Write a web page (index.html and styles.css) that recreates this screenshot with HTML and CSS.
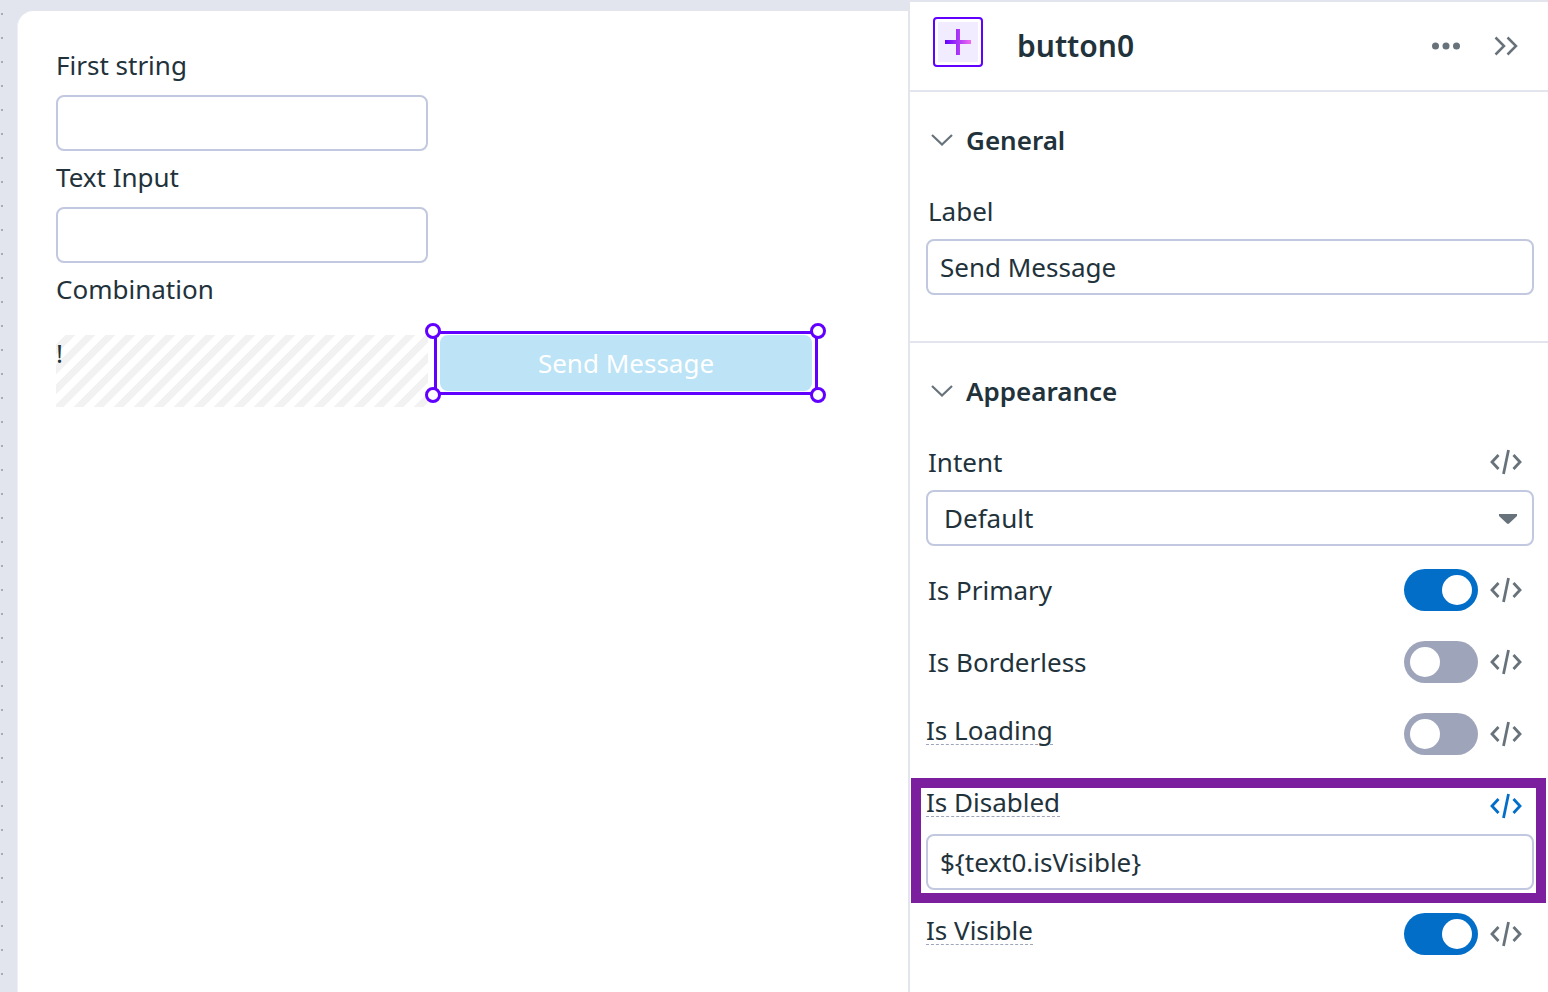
FILE: index.html
```html
<!DOCTYPE html>
<html lang="en">
<head>
<meta charset="utf-8">
<title>button0</title>
<link rel="stylesheet" href="styles.css">
</head>
<body>
<svg class="defs" aria-hidden="true">
  <symbol id="code" viewBox="0 0 32 26">
    <path d="M8.500 6 2 13l6.500 7M23.500 6 30 13l-6.500 7" fill="none" stroke="currentColor" stroke-width="2.800"/>
    <path d="M18.500 1 13.500 25" fill="none" stroke="currentColor" stroke-width="2.800"/>
  </symbol>
  <symbol id="chevron" viewBox="0 0 22 12">
    <path d="M1 1l10 9.500L21 1" fill="none" stroke="currentColor" stroke-width="2.200"/>
  </symbol>
</svg>
<div class="app">
  <main class="canvas">
    <form class="sheet">
      <div class="field">
        <label for="first">First string</label>
        <input class="box" id="first" type="text">
      </div>
      <div class="field">
        <label for="second">Text Input</label>
        <input class="box" id="second" type="text">
      </div>
      <div class="caption">Combination</div>
      <div class="result-row">
        <div class="result">!</div>
        <div class="selected">
          <button class="send" type="button" disabled>Send Message</button>
          <div class="outline">
            <span class="handle top left"></span>
            <span class="handle top right"></span>
            <span class="handle bottom left"></span>
            <span class="handle bottom right"></span>
          </div>
        </div>
      </div>
    </form>
  </main>

  <aside class="panel">
    <header class="panel-head">
      <span class="widget-icon">
        <svg width="40" height="40" viewBox="0 0 40 40" aria-hidden="true">
          <defs>
            <linearGradient id="plus" gradientUnits="userSpaceOnUse" x1="7" y1="0" x2="33" y2="0">
              <stop offset="0" stop-color="#6200ff"/>
              <stop offset="0.500" stop-color="#a936f7"/>
              <stop offset="1" stop-color="#f26bf0"/>
            </linearGradient>
          </defs>
          <rect width="40" height="40" fill="#f1ecff"/>
          <path d="M18 7h4v11h11v4H22v11h-4V22H7v-4h11z" fill="url(#plus)"/>
        </svg>
      </span>
      <h1>button0</h1>
      <button class="icon-button" type="button" aria-label="More">
        <svg width="28" height="8" viewBox="0 0 28 8"><g fill="currentColor"><circle cx="3.500" cy="4" r="3.500"/><circle cx="14" cy="4" r="3.500"/><circle cx="24.500" cy="4" r="3.500"/></g></svg>
      </button>
      <button class="icon-button" type="button" aria-label="Collapse">
        <svg width="24" height="20" viewBox="0 0 24 20"><path d="M1.500 1.500 10 10l-8.500 8.500M13.500 1.500 22 10l-8.500 8.500" fill="none" stroke="currentColor" stroke-width="2.500"/></svg>
      </button>
    </header>

    <section class="section">
      <h2><svg class="chevron"><use href="#chevron"/></svg>General</h2>
      <div class="props">
        <div class="prop">
          <div class="row"><label class="name" for="label">Label</label></div>
          <input class="box" id="label" type="text" value="Send Message">
        </div>
      </div>
    </section>

    <section class="section">
      <h2><svg class="chevron"><use href="#chevron"/></svg>Appearance</h2>
      <div class="props">
        <div class="prop">
          <div class="row">
            <label class="name" for="intent">Intent</label>
            <button class="code" type="button" aria-label="Edit intent as code"><svg><use href="#code"/></svg></button>
          </div>
          <div class="select">
            <select class="box" id="intent"><option>Default</option></select>
            <svg class="caret" viewBox="0 0 18 10"><path d="M0 0h18v2L10 9.600q-1 .8-2 0L0 2z" fill="currentColor"/></svg>
          </div>
        </div>
        <div class="row">
          <label class="name" for="primary">Is Primary</label>
          <input class="toggle" id="primary" type="checkbox" checked>
          <button class="code" type="button" aria-label="Edit primary as code"><svg><use href="#code"/></svg></button>
        </div>
        <div class="row">
          <label class="name" for="borderless">Is Borderless</label>
          <input class="toggle" id="borderless" type="checkbox">
          <button class="code" type="button" aria-label="Edit borderless as code"><svg><use href="#code"/></svg></button>
        </div>
        <div class="row">
          <label class="name hint" for="loading">Is Loading</label>
          <input class="toggle" id="loading" type="checkbox">
          <button class="code" type="button" aria-label="Edit loading as code"><svg><use href="#code"/></svg></button>
        </div>
        <div class="prop highlighted">
          <div class="row">
            <label class="name hint" for="disabled">Is Disabled</label>
            <button class="code active" type="button" aria-label="Edit disabled as code"><svg><use href="#code"/></svg></button>
          </div>
          <input class="box" id="disabled" type="text" value="${text0.isVisible}">
        </div>
        <div class="row">
          <label class="name hint" for="visible">Is Visible</label>
          <input class="toggle" id="visible" type="checkbox" checked>
          <button class="code" type="button" aria-label="Edit visible as code"><svg><use href="#code"/></svg></button>
        </div>
      </div>
    </section>
  </aside>
</div>
</body>
</html>
```

FILE: styles.css
```css
* {
  box-sizing: border-box;
}

body {
  margin: 0;
  color: #22323b;
  font: 26px/36px "Noto Sans", "Open Sans", sans-serif;
}

button,
input,
select {
  margin: 0;
  color: inherit;
  font: inherit;
}

h1,
h2 {
  margin: 0;
  font-weight: 600;
}

.defs {
  position: absolute;
  width: 0;
  height: 0;
}

.app {
  display: flex;
  min-height: 100vh;
}

/* Canvas */

.canvas {
  display: flex;
  flex: 1;
  min-width: 0;
  padding: 11px 0 0 17px;
  background: #e2e5ee radial-gradient(circle at 2px 14px, #a8abb5 1px, transparent 1px) 0 0 / 24px 24px;
}

.sheet {
  display: flex;
  flex: 1;
  flex-direction: column;
  gap: 8px;
  min-width: 0;
  padding: 36px 38px;
  border-left: 1px solid #eff0f7;
  border-radius: 16px 0 0 0;
  background: #fff;
}

.field {
  display: flex;
  flex-direction: column;
  gap: 12px;
  max-width: 372px;
}

.box {
  display: block;
  width: 100%;
  height: 56px;
  padding: 0 12px;
  border: 2px solid #c1c8df;
  border-radius: 8px;
  background: #fff;
}

.result-row {
  display: grid;
  grid-template-columns: repeat(2, minmax(0, 372px));
  align-items: start;
  gap: 12px;
  margin-top: 20px;
}

.result {
  height: 72px;
  background: linear-gradient(135deg, transparent 25%, #f2f2f2 25% 50%, transparent 50% 75%, #f2f2f2 75%) 0 0 / 20px 20px;
}

.selected {
  position: relative;
}

.send {
  display: block;
  width: 100%;
  height: 56px;
  border: 0;
  border-radius: 8px;
  background: #bce3f6;
  color: #fff;
}

.outline {
  position: absolute;
  inset: -4px -6px;
  border: 3px solid #6200ff;
}

.handle {
  position: absolute;
  width: 16px;
  height: 16px;
  border: 3px solid #6200ff;
  border-radius: 50%;
  background: #fff;
}

.top {
  top: -11px;
}

.bottom {
  bottom: -11px;
}

.left {
  left: -12px;
}

.right {
  right: -11px;
}

/* Property panel */

.panel {
  flex: 0 0 640px;
  border: solid #e2e5ee;
  border-width: 2px 0 0 2px;
  background: #fff;
}

.panel-head {
  display: flex;
  align-items: center;
  gap: 34px;
  height: 90px;
  padding: 0 30px 0 23px;
  border-bottom: 2px solid #e2e5ee;
  color: #67727a;
}

.widget-icon {
  display: grid;
  place-items: center;
  width: 50px;
  height: 50px;
  margin-bottom: 8px;
  border: 2px solid #6200ff;
  border-radius: 4px;
}

h1 {
  flex: 1;
  color: #22323b;
  font-size: 30px;
}

.icon-button,
.code {
  display: flex;
  padding: 0;
  border: 0;
  background: none;
}

.icon-button {
  color: #67727a;
}

.section {
  padding: 30px 14px 46px 16px;
}

.section + .section {
  border-top: 2px solid #e2e5ee;
}

h2 {
  display: flex;
  align-items: center;
  gap: 13px;
  padding-left: 5px;
  font-size: 26px;
}

.chevron {
  width: 22px;
  height: 12px;
  color: #67727a;
}

.props {
  display: flex;
  flex-direction: column;
  gap: 16px;
  margin-top: 25px;
}

.row {
  display: flex;
  align-items: center;
  gap: 12px;
  height: 56px;
  padding-right: 12px;
}

.name {
  margin-right: auto;
  padding-left: 2px;
}

.hint {
  margin-bottom: 8px;
  padding-left: 0;
  border-bottom: 1px dashed #9ea5bd;
  line-height: 28px;
}

.code {
  color: #67727a;
}

.code.active {
  color: #026ec8;
}

.code svg {
  width: 32px;
  height: 26px;
}

.toggle {
  width: 74px;
  height: 42px;
  padding: 6px;
  border-radius: 21px;
  background: #9ea5bb;
  appearance: none;
}

.toggle::before {
  display: block;
  width: 30px;
  height: 30px;
  border-radius: 50%;
  background: #fff;
  content: "";
}

.toggle:checked {
  background: #026ec8;
}

.toggle:checked::before {
  margin-left: auto;
}

.select {
  position: relative;
}

.select .box {
  padding: 0 16px;
  appearance: none;
}

.caret {
  position: absolute;
  top: 24px;
  right: 17px;
  width: 18px;
  height: 10px;
  color: #67727a;
  pointer-events: none;
}

.highlighted {
  position: relative;
}

.highlighted::after {
  position: absolute;
  inset: 0 -12px -13px -15px;
  border: 10px solid #7b1f9e;
  content: "";
  pointer-events: none;
}
```
